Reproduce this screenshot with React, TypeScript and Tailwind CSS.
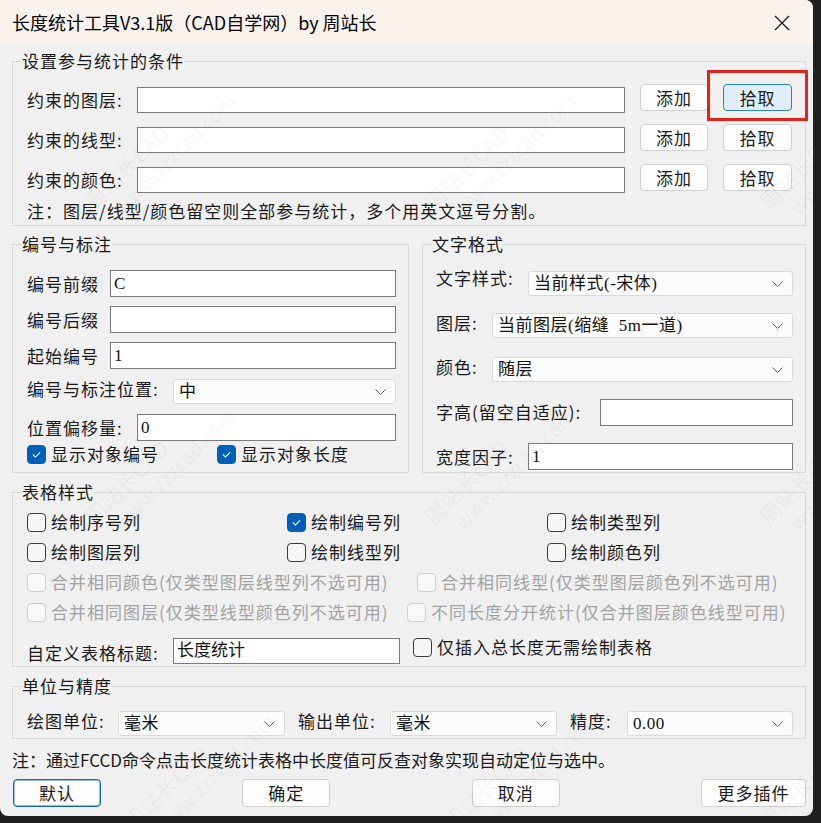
import React from "react";

// Length-statistics plugin dialog (Windows 11 style)

type Props = { children?: React.ReactNode; className?: string };

const Chevron = () => (
  <svg width="11" height="6" viewBox="0 0 11 6" className="shrink-0">
    <polyline points="0.5,0.5 5.5,5.5 10.5,0.5" fill="none" stroke="#5f5f5f" strokeWidth="1" />
  </svg>
);

const Field = ({ w, value = "", className = "", h = "h-[27px]" }: { w: string; value?: string; className?: string; h?: string }) => (
  <div
    className={`${w} ${h} ${className} shrink-0 border border-[#7a7a7a] bg-white pl-[3px] flex items-center text-[17px] text-[#111] font-['Liberation_Serif','Noto_Sans_CJK_SC',serif]`}
  >
    {value}
  </div>
);

const Combo = ({ w, value, className = "" }: { w: string; value: string; className?: string }) => (
  <div
    className={`${w} ${className} h-[25px] shrink-0 flex items-center justify-between rounded-[3px] border border-[#dadada] bg-[#fcfcfc] pl-[5px] pr-[9px]`}
  >
    <span className="text-[17px] tracking-[0.5px] text-[#111] font-['Liberation_Serif','Noto_Sans_CJK_SC',serif] whitespace-pre">
      {value}
    </span>
    <Chevron />
  </div>
);

const Btn = ({ w, children, className = "", active = false, primary = false }: Props & { w: string; active?: boolean; primary?: boolean }) => {
  let look = "border-[#d0d0d0] bg-[#fdfdfd]";
  if (active) look = "border-[#2b7cd3] bg-[#e0eef9]";
  if (primary) look = "border-[#1565b5] bg-[#fdfdfd] shadow-[inset_0_0_0_1px_rgba(21,101,181,0.45)]";
  return (
    <div
      className={`${w} ${look} h-[27px] ${className} shrink-0 flex items-center justify-center rounded-[4px] border text-[17px] tracking-[1px] text-[#1a1a1a]`}
    >
      {children}
    </div>
  );
};

const Check = ({ label, checked = false, disabled = false, className = "" }: { label: string; checked?: boolean; disabled?: boolean; className?: string }) => {
  let box = "border border-[#3a3a3a] bg-[#f7f7f7]";
  if (checked) box = "bg-[#005fb8] border border-[#005fb8]";
  if (disabled) box = "border border-[#cfcfcf] bg-[#f8f8f8]";
  return (
    <div className={`flex items-center gap-[5px] shrink-0 ${className}`}>
      <span className={`w-[19px] h-[19px] rounded-[4px] flex items-center justify-center ${box}`}>
        {checked && (
          <svg width="19" height="19" viewBox="0 0 19 19">
            <polyline points="5.5,9.5 8.3,12.3 13.5,7" fill="none" stroke="#fff" strokeWidth="1.2" />
          </svg>
        )}
      </span>
      <span className={`text-[17px] tracking-[1px] leading-[24px] ${disabled ? "text-[#a3a3a3]" : "text-[#1a1a1a]"}`}>
        {label}
      </span>
    </div>
  );
};

const Group = ({ title, children, className = "" }: Props & { title: string }) => (
  <fieldset className={`border border-[#d8d8d8] px-[9px] ${className}`}>
    <legend className="text-[17px] leading-[24px] tracking-[1px] text-[#1a1a1a]">{title}</legend>
    {children}
  </fieldset>
);

const Label = ({ children, className = "" }: Props) => (
  <span className={`shrink-0 text-[17px] leading-[24px] tracking-[1px] text-[#1a1a1a] whitespace-nowrap ${className}`}>
    {children}
  </span>
);

// faint site watermark tiled over the dialog
const marks = [
  "left-[70px] top-[125px]",
  "left-[410px] top-[125px]",
  "left-[745px] top-[125px]",
  "left-[70px] top-[440px]",
  "left-[410px] top-[440px]",
  "left-[745px] top-[440px]",
  "left-[110px] top-[745px]",
  "left-[430px] top-[745px]",
  "left-[745px] top-[745px]",
];

export default function App() {
  return (
    <div className="w-[821px] h-[823px] bg-[#1f1f1f] font-['Noto_Sans_CJK_SC',sans-serif]">
      <div className="relative w-[813px] h-[816px] bg-[#f0f0f0] rounded-tr-[8px] rounded-b-[8px] overflow-hidden">
        {/* title bar */}
        <div className="h-[45px] bg-[#f9f2ed] flex items-center justify-between pl-[12px] pr-[23px]">
          <span className="text-[18px] text-black">长度统计工具V3.1版（CAD自学网）by 周站长</span>
          <svg width="16" height="16" viewBox="0 0 16 16">
            <line x1="1" y1="1" x2="15" y2="15" stroke="#1a1a1a" strokeWidth="1.2" />
            <line x1="15" y1="1" x2="1" y2="15" stroke="#1a1a1a" strokeWidth="1.2" />
          </svg>
        </div>

        <div className="pl-[12px] pr-[7px] pt-[4px]">
          {/* filter conditions */}
          <Group title="设置参与统计的条件">
            <div className="pl-[5px] pr-[4px] pt-[11px] pb-[2px]">
              {["约束的图层:", "约束的线型:", "约束的颜色:"].map((label, i) => (
                <div key={label} className={`flex items-start h-[30px] ${i ? "mt-[10px]" : ""}`}>
                  <Label className="w-[110px] mt-[4px]">{label}</Label>
                  <Field w="w-[488px]" h="h-[26px]" className="mt-[3px]" />
                  <Btn w="w-[68px]" className="ml-[15px]">添加</Btn>
                  <div className="relative ml-[15px]">
                    <Btn w="w-[69px]" active={i === 0}>拾取</Btn>
                    {i === 0 && (
                      <div className="absolute left-[-16px] top-[-14px] w-[101px] h-[51px] border-[3px] border-[#e3231b]" />
                    )}
                  </div>
                </div>
              ))}
              <p className="mt-[5px] text-[17px] leading-[24px] tracking-[1px] text-[#1a1a1a]">
                注：图层/线型/颜色留空则全部参与统计，多个用英文逗号分割。
              </p>
            </div>
          </Group>

          <div className="mt-[6px] flex gap-[13px]">
            {/* numbering */}
            <Group title="编号与标注" className="w-[397px]">
              <div className="pl-[5px] pr-[3px] pt-[14px] pb-[7px]">
                <div className="flex items-center h-[27px]">
                  <Label className="w-[83px]">编号前缀</Label>
                  <Field w="w-[286px]" value="C" />
                </div>
                <div className="flex items-center h-[27px] mt-[9px]">
                  <Label className="w-[83px]">编号后缀</Label>
                  <Field w="w-[286px]" />
                </div>
                <div className="flex items-center h-[27px] mt-[9px]">
                  <Label className="w-[83px]">起始编号</Label>
                  <Field w="w-[286px]" value="1" />
                </div>
                <div className="flex items-center h-[27px] mt-[9px]">
                  <Label className="w-[146px] mb-[5px]">编号与标注位置:</Label>
                  <Combo w="w-[223px]" value="中" />
                </div>
                <div className="flex items-center h-[27px] mt-[9px]">
                  <Label className="w-[110px]">位置偏移量:</Label>
                  <Field w="w-[259px]" value="0" />
                </div>
                <div className="flex items-center h-[22px] mt-[2px]">
                  <Check label="显示对象编号" checked className="w-[190px]" />
                  <Check label="显示对象长度" checked />
                </div>
              </div>
            </Group>

            {/* text format */}
            <Group title="文字格式" className="w-[384px]">
              <div className="pl-[4px] pr-[3px] pt-[10px] pb-[2px]">
                <div className="flex items-start">
                  <Label className="w-[92px]">文字样式:</Label>
                  <Combo w="w-[265px]" value="当前样式(-宋体)" className="mt-[5px]" />
                </div>
                <div className="flex items-start mt-[12px]">
                  <Label className="w-[56px] mt-[3px]">图层:</Label>
                  <Combo w="w-[301px]" value="当前图层(缩缝  5m一道)" className="mt-[5px]" />
                </div>
                <div className="flex items-start mt-[14px]">
                  <Label className="w-[56px] mt-[3px]">颜色:</Label>
                  <Combo w="w-[301px]" value="随层" className="mt-[5px]" />
                </div>
                <div className="flex items-start mt-[17px]">
                  <Label className="w-[164px] mt-[1px]">字高(留空自适应):</Label>
                  <Field w="w-[193px]" />
                </div>
                <div className="flex items-start mt-[17px]">
                  <Label className="w-[92px] mt-[2px]">宽度因子:</Label>
                  <Field w="w-[265px]" value="1" />
                </div>
              </div>
            </Group>
          </div>

          {/* table style */}
          <Group title="表格样式" className="mt-[7px]">
            <div className="pl-[5px] pr-[4px] pt-[6px] pb-[2px]">
              <div className="flex items-center h-[24px]">
                <Check label="绘制序号列" className="w-[260px]" />
                <Check label="绘制编号列" checked className="w-[260px]" />
                <Check label="绘制类型列" />
              </div>
              <div className="flex items-center h-[24px] mt-[6px]">
                <Check label="绘制图层列" className="w-[260px]" />
                <Check label="绘制线型列" className="w-[260px]" />
                <Check label="绘制颜色列" />
              </div>
              <div className="flex items-center h-[24px] mt-[6px]">
                <Check label="合并相同颜色(仅类型图层线型列不选可用)" disabled className="w-[390px]" />
                <Check label="合并相同线型(仅类型图层颜色列不选可用)" disabled />
              </div>
              <div className="flex items-center h-[24px] mt-[6px]">
                <Check label="合并相同图层(仅类型线型颜色列不选可用)" disabled className="w-[380px]" />
                <Check label="不同长度分开统计(仅合并图层颜色线型可用)" disabled />
              </div>
              <div className="flex items-center h-[26px] mt-[14px]">
                <Label className="w-[146px] mt-[3px]">自定义表格标题:</Label>
                <Field w="w-[227px]" h="h-[26px]" value="长度统计" />
                <Check label="仅插入总长度无需绘制表格" className="ml-[13px] mb-[8px]" />
              </div>
            </div>
          </Group>

          {/* units */}
          <Group title="单位与精度" className="mt-[7px]">
            <div className="pl-[5px] pr-[3px] pt-[13px] pb-[2px]">
              <div className="flex items-center h-[25px]">
                <Label className="w-[91px] mb-[5px]">绘图单位:</Label>
                <Combo w="w-[167px]" value="毫米" />
                <Label className="w-[92px] ml-[13px] mb-[5px]">输出单位:</Label>
                <Combo w="w-[167px]" value="毫米" />
                <Label className="w-[57px] ml-[13px] mb-[5px]">精度:</Label>
                <Combo w="w-[166px]" value="0.00" />
              </div>
            </div>
          </Group>

          <p className="mt-[9px] text-[17px] leading-[24px] text-[#1a1a1a]">
            注：通过FCCD命令点击长度统计表格中长度值可反查对象实现自动定位与选中。
          </p>

          <div className="mt-[7px] pl-[1px] flex justify-between">
            <Btn w="w-[88px]" primary className="h-[28px]">默认</Btn>
            <Btn w="w-[88px]" className="h-[28px]">确定</Btn>
            <Btn w="w-[88px]" className="h-[28px]">取消</Btn>
            <Btn w="w-[105px]" className="h-[28px]">更多插件</Btn>
          </div>
        </div>

        <div className="pointer-events-none absolute inset-0 overflow-hidden">
          {marks.map((pos) => (
            <div
              key={pos}
              className={`absolute ${pos} -rotate-45 flex flex-col items-start text-black/[0.045] leading-[26px] whitespace-nowrap`}
            >
              <span className="text-[22px]">周站长CAD</span>
              <span className="text-[20px] ml-[18px]">www.zzzcad.com</span>
            </div>
          ))}
        </div>
      </div>
    </div>
  );
}
